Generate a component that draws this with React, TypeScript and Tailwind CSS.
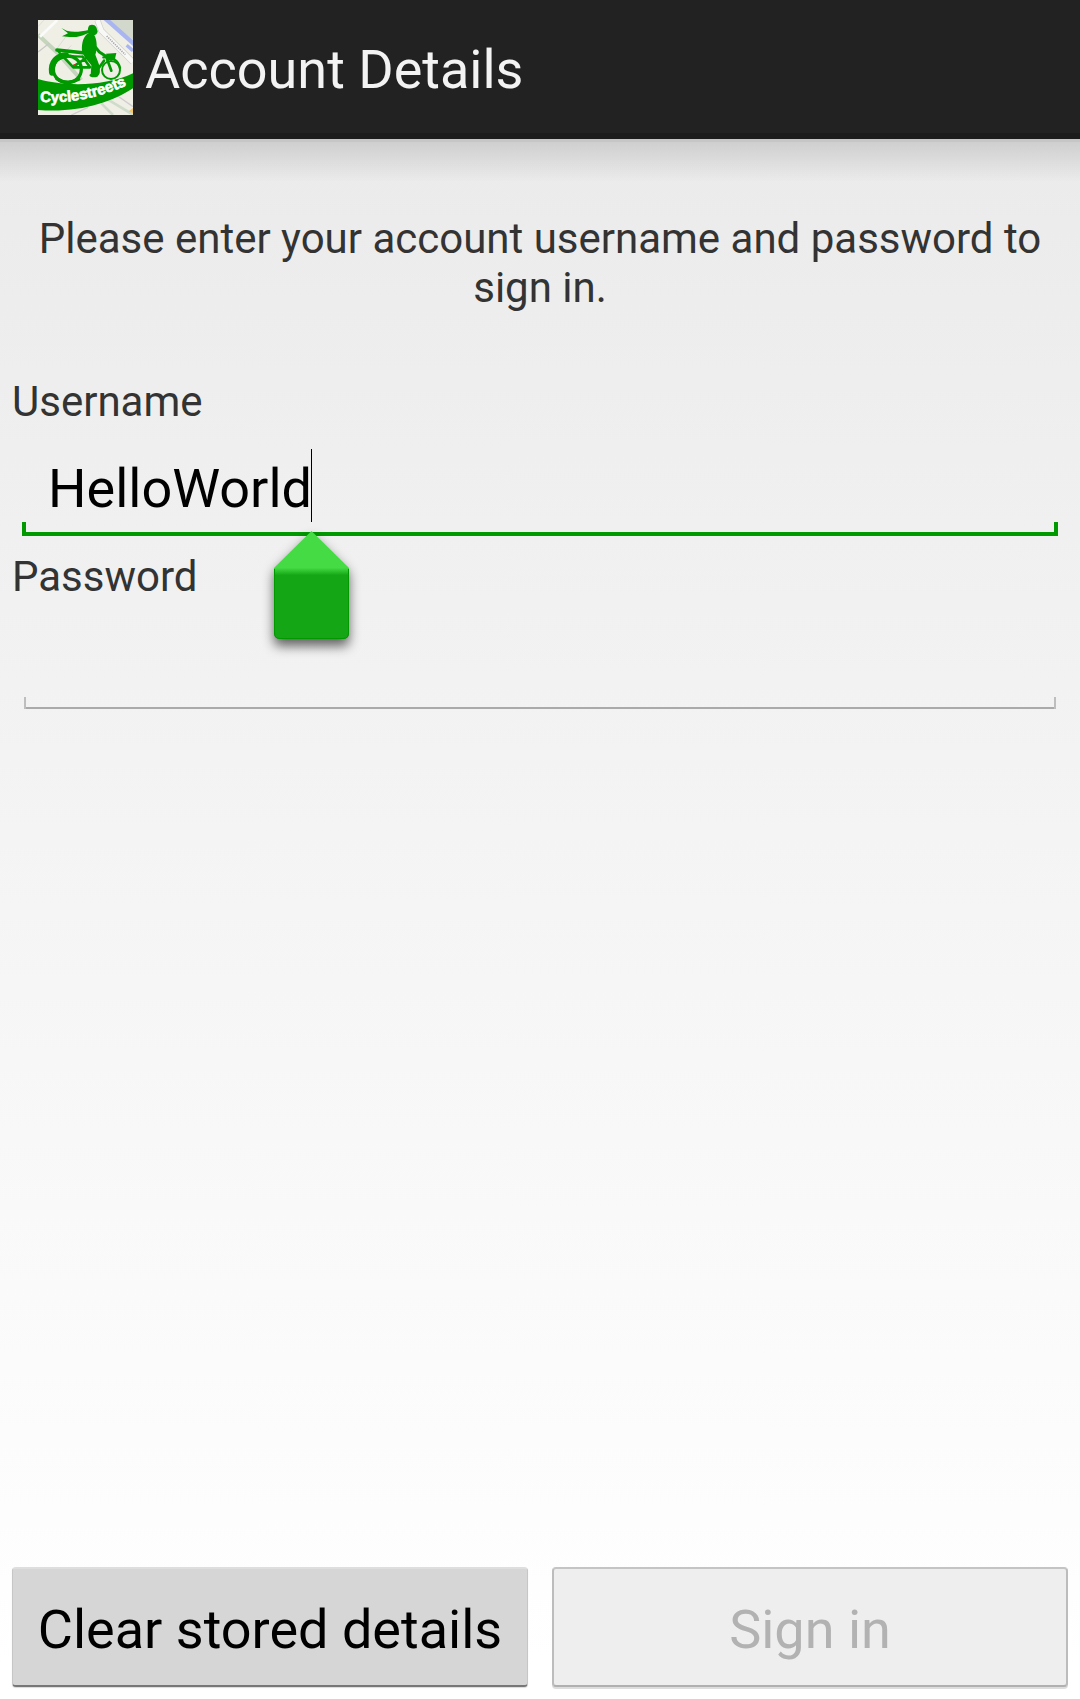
import { useState } from "react";

function Logo() {
  return (
    <svg viewBox="0 0 285 285" className="size-[95px] shrink-0" role="img" aria-label="CycleStreets">
      <rect width="285" height="285" fill="#efefe6" />
      <g fill="none">
        <path d="M0 44L58 98L130 180" stroke="#c4d4bd" strokeWidth="12" />
        <path d="M58 0L6 50" stroke="#fbfbfb" strokeWidth="8" />
        <path d="M0 96L34 70" stroke="#c9c6c6" strokeWidth="4" />
        <path d="M0 20L18 0M58 84L96 34M100 76L60 120" stroke="#dfddd6" strokeWidth="3" />
        <path d="M205 0H285V60Z" fill="#d2d9cc" stroke="none" />
        <path d="M200 -6L290 74" stroke="#a9b5f0" strokeWidth="13" />
        <path d="M266 76L285 92" stroke="#a9b5ee" strokeWidth="10" />
        <path d="M178 0L190 32L285 126" stroke="#cfcfcb" strokeWidth="18" />
        <path d="M178 0L190 32L285 126" stroke="#f8f8f6" strokeWidth="14" />
        <path d="M206 48L262 104" stroke="#a9a9a9" strokeWidth="5" strokeDasharray="4 3" />
        <path d="M190 250L225 285M205 236L285 284" stroke="#cfdccb" strokeWidth="8" />
        <path d="M100 285L150 262M235 225L285 260" stroke="#d0cdd2" strokeWidth="4" />
        <path d="M272 274L285 264V280Z" fill="#f2c668" />
      </g>
      <g fill="none" stroke="#009900" strokeLinecap="round" strokeLinejoin="round">
        <ellipse cx="88" cy="148" rx="42" ry="40" strokeWidth="10" />
        <path d="M42 158C38 124 58 108 84 106" strokeWidth="18" />
        <path d="M56 176Q88 196 122 178" strokeWidth="10" />
        <circle cx="219" cy="150" r="27" strokeWidth="6" />
        <path d="M57 90L142 99" strokeWidth="11" />
        <path d="M60 92L72 108L130 110" strokeWidth="7" />
        <path d="M78 112L106 142H156L134 110M106 140L142 116" strokeWidth="8" />
        <path d="M206 114L220 152" strokeWidth="8" />
        <path d="M172 158L198 122" strokeWidth="8" />
        <path d="M168 76L184 96L206 110" strokeWidth="9" />
        <path d="M196 112C222 108 242 122 246 144" strokeWidth="7" />
        <path d="M182 150C184 166 172 172 158 166" strokeWidth="7" />
      </g>
      <g fill="#009900">
        <path d="M70 24L86 32C106 38 128 35 152 30L155 38C140 42 128 51 108 51C95 52 85 50 72 49L90 40Z" />
        <path d="M151 22C153 12 170 12 175 22L179 34C178 42 172 47 164 46L152 42C149 36 149 28 151 22Z" />
        <path d="M150 40C138 48 130 66 132 94L140 112L160 136L158 164L178 170L186 142L172 104C178 88 178 58 168 44Z" />
        <path d="M204 101L235 99L230 121L210 120Z" />
        <path d="M0 177C80 200 200 200 285 160V205C220 248 120 280 0 270Z" />
      </g>
      <circle cx="109" cy="135" r="3" fill="#d33" />
      <path id="banner-line" d="M6 245C90 252 190 236 310 176" fill="none" />
      <text
        fill="#fff"
        stroke="#fff"
        strokeWidth="2"
        className="font-['Liberation_Sans',sans-serif] font-bold"
        fontSize="45"
      >
        <textPath href="#banner-line">Cyclestreets</textPath>
      </text>
    </svg>
  );
}

function CursorHandle() {
  return (
    <svg
      viewBox="0 0 115 140"
      className="pointer-events-none absolute left-[242px] top-[95px] z-10 h-[140px] w-[115px]"
      aria-hidden="true"
    >
      <defs>
        <linearGradient id="handle-fill" x1="0" y1="10" x2="0" y2="118" gradientUnits="userSpaceOnUse">
          <stop offset="0.34" stopColor="#45db45" />
          <stop offset="0.41" stopColor="#14a614" />
        </linearGradient>
        <filter id="handle-shadow" x="-30%" y="-30%" width="160%" height="160%">
          <feGaussianBlur stdDeviation="6" />
        </filter>
      </defs>
      <path
        d="M57.5 16L95 53V119Q95 125 89 125H26Q20 125 20 119V53Z"
        fill="#000"
        fillOpacity="0.6"
        filter="url(#handle-shadow)"
      />
      <path d="M57.5 10L95 47V112Q95 118 89 118H26Q20 118 20 112V47Z" fill="url(#handle-fill)" />
      <path
        d="M20.5 48V112Q20.5 117.5 26 117.5H89Q94.5 117.5 94.5 112V48"
        fill="none"
        stroke="#009900"
      />
    </svg>
  );
}

export default function App() {
  const [username, setUsername] = useState("HelloWorld");
  const [password, setPassword] = useState("");

  return (
    <div className="flex min-h-screen flex-col bg-[linear-gradient(#e9e9e9,#ffffff_98%)] font-['Roboto',sans-serif] text-[42px] leading-[49px] text-[#333333]">
      <header className="flex h-[139px] items-center gap-3 border-b-[6px] border-[#1c1c1c] bg-[#222222] px-[38px] pt-0.5">
        <Logo />
        <h1 className="pt-1 text-[54px] leading-[64px] text-[#f3f3f3]">Account Details</h1>
      </header>
      <div className="h-[3px] bg-[#c6c6c6]" />
      <form className="flex grow flex-col" onSubmit={(e) => e.preventDefault()}>
        <div className="h-10 bg-linear-to-b from-black/12 to-transparent" />
        <p className="px-3 pt-8 text-center">
          Please enter your account username and password to sign in.
        </p>

        <div className="mt-[65px] px-3">
          <label htmlFor="username" className="block">
            Username
          </label>
          <div className="relative flex h-[110px] items-end px-[10px]">
            <span className="h-[14px] w-1 bg-[#009900]" />
            <input
              id="username"
              type="text"
              value={username}
              onChange={(e) => setUsername(e.target.value)}
              className="h-full min-w-0 grow border-b-4 border-[#009900] bg-transparent px-[22px] pt-[18px] text-[54px] leading-[64px] text-black outline-none"
            />
            <span className="h-[14px] w-1 bg-[#009900]" />
            <span className="absolute left-[299px] top-[23px] h-[73px] w-px bg-black" />
            <CursorHandle />
          </div>
        </div>

        <div className="mt-4 px-3">
          <label htmlFor="password" className="block">
            Password
          </label>
          <div className="flex h-[108px] items-end px-3">
            <span className="h-3 w-[2px] bg-[#bebebe]" />
            <input
              id="password"
              type="password"
              value={password}
              onChange={(e) => setPassword(e.target.value)}
              className="h-full min-w-0 grow border-b-2 border-[#aaaaaa] bg-transparent px-[22px] pt-[18px] text-[54px] leading-[64px] text-black outline-none"
            />
            <span className="h-3 w-[2px] bg-[#bebebe]" />
          </div>
        </div>

        <div className="mt-auto grid grid-cols-2 gap-6 px-3 pb-3 text-[54px] leading-[64px]">
          <button
            type="button"
            onClick={() => {
              setUsername("");
              setPassword("");
            }}
            className="h-[120px] rounded-[4px] border-x border-t-2 border-b-2 border-x-[#c6c6c6] border-t-[#dedede] border-b-[#777777] bg-[#d6d6d6] pt-1.5 text-black shadow-[0_1px_1px_rgba(0,0,0,0.15)]"
          >
            Clear stored details
          </button>
          <button
            type="submit"
            disabled
            className="h-[120px] rounded-[4px] border-2 border-x-[#bcbcbc] border-t-[#c4c4c4] border-b-[#b0b0b0] bg-[#eeeeee] pt-1.5 text-[#b2b2b2] shadow-[0_2px_0_#dddddd]"
          >
            Sign in
          </button>
        </div>
      </form>
    </div>
  );
}
